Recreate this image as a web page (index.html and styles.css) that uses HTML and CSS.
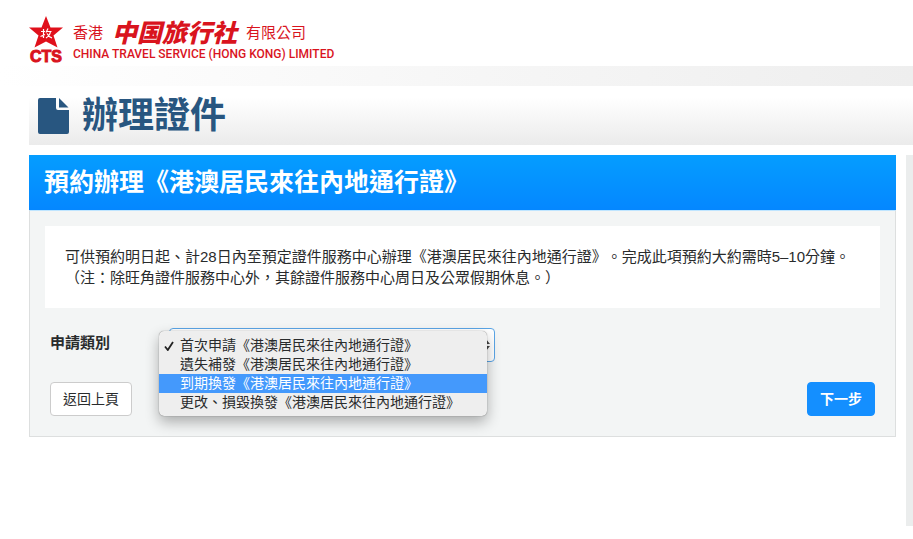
FILE: index.html
```html
<!DOCTYPE html>
<html lang="zh-Hant">
<head>
    <meta charset="UTF-8">
    <meta name="viewport" content="width=device-width, initial-scale=1.0">
    <title>辦理證件</title>
    <link rel="stylesheet" href="styles.css">
</head>
<body>
    <header class="site-header">
        <div class="emblem">
            <svg class="star" viewBox="0 0 34 32" aria-hidden="true">
                <path fill="#e0101b" d="M17 0l4.500 11.500H34L24.500 19.500 28.500 31.500 17 25.500 5.500 31.500 9.500 19.500 0 11.500h12.500z"/>
                <path fill="none" stroke="#fff" stroke-width="1.200" d="M14.500 13v9M12 15.500h4M11.500 20.500l4.500-2M19 12.500l-2 4M18 15.500h4.500M21.500 15.500c-.5 3-2 5-4.500 6.500M18 17.500c1 2 2.500 3.500 5 4.500"/>
            </svg>
            <span class="emblem-name">CTS</span>
        </div>
        <div class="company">
            <div class="company-zh">
                <span>香港</span>
                <strong>中国旅行社</strong>
                <span>有限公司</span>
            </div>
            <div class="company-en">CHINA TRAVEL SERVICE (HONG KONG) LIMITED</div>
        </div>
    </header>
    <div class="band"></div>

    <div class="page">
        <div class="page-title">
            <svg class="file-icon" viewBox="0 0 32 36" aria-hidden="true">
                <path fill="#285680" d="M2 0h16v10a2 2 0 0 0 2 2h11v22a2 2 0 0 1-2 2H2a2 2 0 0 1-2-2V2a2 2 0 0 1 2-2z"/>
                <path fill="#285680" d="M21 0v9.500h9.500z"/>
            </svg>
            <h1>辦理證件</h1>
        </div>

        <div class="columns">
            <main class="panel">
                <h2>預約辦理《港澳居民來往內地通行證》</h2>
                <form class="panel-body">
                    <div class="notice">
                        <p>可供預約明日起、計28日內至預定證件服務中心辦理《港澳居民來往內地通行證》。完成此項預約大約需時5–10分鐘。</p>
                        <p>（注：除旺角證件服務中心外，其餘證件服務中心周日及公眾假期休息。）</p>
                    </div>
                    <div class="form-row">
                        <label for="apply-type">申請類別</label>
                        <div class="select-box">
                            <select id="apply-type">
                                <option>首次申請《港澳居民來往內地通行證》</option>
                                <option>遺失補發《港澳居民來往內地通行證》</option>
                                <option>到期換發《港澳居民來往內地通行證》</option>
                                <option>更改、損毀換發《港澳居民來往內地通行證》</option>
                            </select>
                            <svg class="arrows" viewBox="0 0 8 12" aria-hidden="true">
                                <path fill="#444" d="M4 0l4 5H0zM4 12l4-5H0z"/>
                            </svg>
                            <ul class="menu" role="listbox" aria-label="申請類別">
                                <li role="option" aria-selected="true">
                                    <svg class="check" viewBox="0 0 10 10" aria-hidden="true">
                                        <path fill="none" stroke="#222" stroke-width="1.800" d="M1 5.500L3.800 9 9 1"/>
                                    </svg>
                                    首次申請《港澳居民來往內地通行證》
                                </li>
                                <li role="option">遺失補發《港澳居民來往內地通行證》</li>
                                <li role="option" class="active">到期換發《港澳居民來往內地通行證》</li>
                                <li role="option">更改、損毀換發《港澳居民來往內地通行證》</li>
                            </ul>
                        </div>
                    </div>
                    <div class="actions">
                        <button type="button" class="btn">返回上頁</button>
                        <button type="submit" class="btn btn-primary">下一步</button>
                    </div>
                </form>
            </main>
            <aside class="sidebar"></aside>
        </div>
    </div>
</body>
</html>
```

FILE: styles.css
```css
* {
    box-sizing: border-box;
}
body {
    margin: 0;
    background: #fff;
    color: #292b2c;
    font-family: "Liberation Sans", "Noto Sans CJK TC", sans-serif;
    font-size: 15px;
    line-height: 21px;
    text-spacing-trim: space-all;
}
h1, h2, p, ul {
    margin: 0;
    padding: 0;
}

/* logo */
.site-header {
    display: flex;
    gap: 10px;
    height: 66px;
    padding: 16px 29px 0;
    color: #d9141e;
}
.emblem {
    display: flex;
    flex-direction: column;
    align-items: center;
    width: 34px;
}
.star {
    width: 34px;
    height: 32px;
}
.emblem-name {
    font-size: 16px;
    font-weight: bold;
    line-height: 18px;
    -webkit-text-stroke: 1px #d9141e;
}
.company-zh {
    display: flex;
    align-items: flex-start;
    gap: 9px;
    height: 30px;
    padding-top: 3px;
    font-size: 15px;
    line-height: 28px;
    white-space: nowrap;
}
.company-zh strong {
    font-family: "Noto Sans CJK SC", sans-serif;
    font-size: 25px;
    font-style: italic;
    font-weight: 900;
    line-height: 24px;
}
.company-en {
    font-family: Roboto, sans-serif;
    font-size: 12px;
    font-weight: 500;
    line-height: 16px;
    white-space: nowrap;
}
.band {
    height: 20px;
    background: linear-gradient(to right, #fff, #eee);
}

.page {
    padding-left: 29px;
}
.page-title {
    display: flex;
    align-items: center;
    gap: 12px;
    height: 59px;
    padding-left: 9px;
    background: linear-gradient(#fff 20%, #ebebeb);
    color: #285680;
}
.file-icon {
    width: 32px;
    height: 36px;
}
.page-title h1 {
    font-size: 36px;
    line-height: 59px;
}
.columns {
    display: grid;
    grid-template-columns: 1fr 7px;
    gap: 10px;
    align-items: start;
    margin-top: 10px;
}
.sidebar {
    min-height: 371px;
    background: #ebeded;
}

/* booking panel */
.panel h2 {
    padding: 0 15px;
    background: linear-gradient(#059dff, #0587ff);
    color: #fff;
    font-size: 25px;
    line-height: 55px;
}
.panel-body {
    padding: 15px 15px 20px;
    background: #f3f5f5;
    border: 1px solid #dddfdf;
    border-top-color: #bfe5ff;
}
.notice {
    padding: 20px;
    background: #fff;
}
.form-row {
    display: flex;
    margin-top: 20px;
    padding: 0 5px;
}
.form-row label {
    width: 119px;
    font-weight: bold;
    line-height: 30px;
}
.select-box {
    position: relative;
    flex: 0 1 326px;
}
.select-box select {
    display: block;
    width: 100%;
    height: 34px;
    padding: 0 20px 0 10px;
    appearance: none;
    background: #fff;
    border: 1px solid #5aa5e6;
    border-radius: 4px;
    color: #292b2c;
    font-family: inherit;
    font-size: 14px;
}
.arrows {
    position: absolute;
    top: 11px;
    right: 5px;
    width: 8px;
    height: 12px;
}
.menu {
    position: absolute;
    top: 3px;
    left: -10px;
    right: 8px;
    padding: 5px 0 4px;
    background: #eee;
    border-radius: 5px;
    box-shadow: 0 0 1px rgba(0, 0, 0, 0.6), 0 6px 14px rgba(0, 0, 0, 0.3);
    list-style: none;
}
.menu li {
    position: relative;
    padding-left: 21px;
    font-size: 14px;
    line-height: 19px;
    white-space: nowrap;
}
.menu .active {
    background: #4499fc;
    color: #fff;
}
.check {
    position: absolute;
    top: 5px;
    left: 5px;
    width: 10px;
    height: 10px;
}
.actions {
    display: flex;
    justify-content: space-between;
    margin-top: 20px;
    padding: 0 5px;
}
.btn {
    height: 34px;
    padding: 0 12px 2px;
    background: #fff;
    border: 1px solid #ccc;
    border-radius: 4px;
    color: #292b2c;
    font-family: inherit;
    font-size: 14px;
}
.btn-primary {
    background: #148fff;
    border-color: #148fff;
    color: #fff;
    font-weight: bold;
}
```
